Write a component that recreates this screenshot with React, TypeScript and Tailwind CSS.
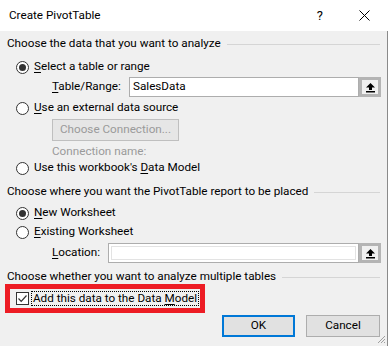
import React from "react";

const Radio = ({ checked }: { checked?: boolean }) => (
  <span className="w-[13px] h-[13px] rounded-full border border-[#333333] bg-white flex items-center justify-center shrink-0">
    {checked && <span className="w-[7px] h-[7px] rounded-full bg-[#333333]" />}
  </span>
);

const UpBtn = () => (
  <div className="w-[22px] h-[20px] border-[3px] border-[#b4b4b4] bg-[#f0f0f0] flex items-center justify-center shrink-0">
    <svg width="11" height="11" viewBox="0 0 11 11">
      <path d="M5.5 1 L10 5.5 L7 5.5 L7 8 L4 8 L4 5.5 L1 5.5 Z" fill="#000" />
      <rect x="1" y="9" width="9" height="1.5" fill="#000" />
    </svg>
  </div>
);

const U = ({ children }: { children: React.ReactNode }) => (
  <span className="underline underline-offset-2">{children}</span>
);

const Header = ({ children, cls }: { children: React.ReactNode; cls: string }) => (
  <div className={`flex items-center pl-[7px] pr-[7px] ${cls}`}>
    <span className="whitespace-nowrap">{children}</span>
    <div className="flex-1 h-px bg-[#d5d5d5] ml-[6px]" />
  </div>
);

export default function App() {
  return (
    <div className="w-[388px] h-[346px] bg-[#f0f0f0] overflow-hidden flex flex-col text-[11.7px] text-black relative font-['Roboto',sans-serif]">
      <div className="h-[31px] bg-white flex items-center shrink-0">
        <span className="ml-[9px]">Create PivotTable</span>
        <span className="ml-auto mr-[36px] text-[13px]">?</span>
        <svg width="11" height="11" viewBox="0 0 11 11" className="mr-[18px]">
          <path d="M0.5 0.5 L10.5 10.5 M10.5 0.5 L0.5 10.5" stroke="#000" strokeWidth="1" />
        </svg>
      </div>
      <div className="flex-1 flex flex-col border-r border-[#8a8a8a]">
        <Header cls="mt-[3px] h-[20px]">Choose the data that you want to analyze</Header>
        <div className="mt-[3px] h-[20px] flex items-center pl-[16px] gap-[5px]">
          <Radio checked />
          <span>
            <U>S</U>elect a table or range
          </span>
        </div>
        <div className="h-[20px] flex items-center pl-[52px]">
          <span className="w-[77px]">
            <U>T</U>able/Range:
          </span>
          <div className="flex-1 h-[20px] border border-[#adadad] bg-white flex items-center pl-[3px]">SalesData</div>
          <UpBtn />
          <div className="w-[6px]" />
        </div>
        <div className="mt-[1px] h-[20px] flex items-center pl-[16px] gap-[5px]">
          <Radio />
          <span>
            <U>U</U>se an external data source
          </span>
        </div>
        <div className="mt-[1px] h-[22px] flex pl-[52px]">
          <div className="w-[127px] h-[22px] border border-[#bfbfbf] bg-[#e6e6e6] text-[#9a9a9a] flex items-center justify-center">
            Choose Connection...
          </div>
        </div>
        <div className="mt-[3px] h-[16px] flex items-center pl-[52px] text-[#9a9a9a]">Connection name:</div>
        <div className="h-[16px] flex items-center pl-[16px] gap-[5px]">
          <Radio />
          <span>
            Use this workbook's <U>D</U>ata Model
          </span>
        </div>
        <Header cls="mt-[6px] h-[20px]">Choose where you want the PivotTable report to be placed</Header>
        <div className="mt-[1px] h-[20px] flex items-center pl-[16px] gap-[5px]">
          <Radio checked />
          <span>
            <U>N</U>ew Worksheet
          </span>
        </div>
        <div className="h-[18px] flex items-center pl-[16px] gap-[5px]">
          <Radio />
          <span>
            <U>E</U>xisting Worksheet
          </span>
        </div>
        <div className="mt-[2px] h-[20px] flex items-center pl-[52px]">
          <span className="w-[56px]">
            <U>L</U>ocation:
          </span>
          <div className="flex-1 h-[20px] border border-[#adadad] bg-white p-[2px]">
            <div className="w-full h-full border border-[#e3e3e3] bg-white" />
          </div>
          <UpBtn />
          <div className="w-[6px]" />
        </div>
        <Header cls="mt-[7px] h-[14px]">Choose whether you want to analyze multiple tables</Header>
        <div className="ml-[5px] w-[200px] h-[29px] border-[5px] border-[#ed1c24] flex items-center pl-[6px] shrink-0">
          <span className="w-[13px] h-[13px] border border-[#333333] bg-white flex items-center justify-center shrink-0">
            <svg width="11" height="11" viewBox="0 0 11 11">
              <path d="M1.5 5.5 L4.2 8.3 L9.5 2.5" stroke="#333" strokeWidth="1.2" fill="none" />
            </svg>
          </span>
          <span className="ml-[2px] px-px border border-dotted border-black leading-[13px] whitespace-nowrap">
            Add this data to the Data <U>M</U>odel
          </span>
        </div>
        <div className="mt-[2px] h-[22px] flex justify-end pr-[7px] gap-[11px]">
          <div className="w-[73px] h-[22px] border-2 border-[#0078d7] bg-[#e1e1e1] flex items-center justify-center">OK</div>
          <div className="w-[74px] h-[22px] border border-[#adadad] bg-[#e1e1e1] flex items-center justify-center">
            Cancel
          </div>
        </div>
        <svg width="10" height="10" viewBox="0 0 10 10" className="absolute right-[2px] bottom-[2px]">
          <path d="M9 2 L2 9 M9 5 L5 9 M9 8 L8 9" stroke="#a0a0a0" strokeWidth="1" />
        </svg>
      </div>
    </div>
  );
}
